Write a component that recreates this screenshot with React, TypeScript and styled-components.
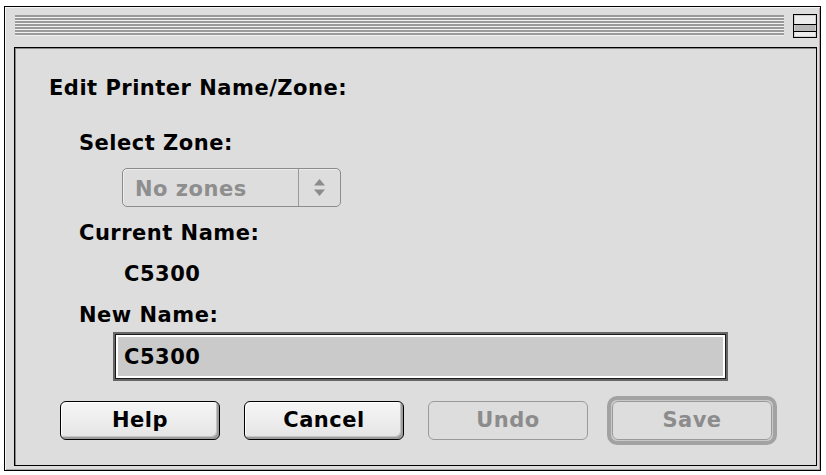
import React from "react";
import styled, { createGlobalStyle } from "styled-components";

const GlobalStyle = createGlobalStyle`
  html, body { margin: 0; padding: 0; background: #ffffff; }
  body { font-family: "DejaVu Sans", "Liberation Sans", sans-serif; }
  #root { width: 826px; height: 475px; overflow: hidden; }
`;

const Window = styled.div`
  margin: 6px 0 0 4px;
  width: 817px;
  height: 465px;
  box-sizing: border-box;
  border: 1px solid #000;
  background: #dddddd;
  box-shadow: inset 1px 1px 0 #f4f4f4, inset -1px -1px 0 #a8a8a8;
  padding: 0 3px 4px 9px;
  display: flex;
  flex-direction: column;
`;

const TitleBar = styled.div`
  height: 40px;
  box-sizing: border-box;
  padding-top: 8px;
  display: flex;
  align-items: flex-start;
`;

const Stripes = styled.div`
  margin-left: 1px;
  width: 769px;
  height: 21px;
  background: repeating-linear-gradient(
    to bottom,
    #9a9a9a 0px,
    #9a9a9a 2px,
    #f2f2f2 2px,
    #f2f2f2 3px
  );
`;

const CollapseBox = styled.svg`
  margin-left: 9px;
  margin-top: -1px;
  display: block;
`;

const Panel = styled.div`
  flex: 1;
  border: 1px solid #000;
  box-shadow: inset 1px 1px 0 #8a8a8a;
  padding: 28px 0 0 34px;
  display: flex;
  flex-direction: column;
  align-items: flex-start;
`;

const Text = styled.div<{ $indent?: number; $top?: number }>`
  font-family: "DejaVu Sans", "Liberation Sans", sans-serif;
  font-weight: bold;
  font-size: 21px;
  letter-spacing: 0.5px;
  line-height: 24px;
  height: 24px;
  color: #000;
  margin-left: ${(p) => p.$indent ?? 0}px;
  margin-top: ${(p) => p.$top ?? 0}px;
  white-space: nowrap;
`;

const Popup = styled.div`
  margin-left: 73px;
  margin-top: 13px;
  width: 219px;
  height: 39px;
  box-sizing: border-box;
  border: 1px solid #8c8c8c;
  border-radius: 5px;
  box-shadow: inset 1px 1px 0 #ececec;
  display: flex;
`;

const PopupLabel = styled.div`
  flex: 1;
  padding: 3px 0 0 12px;
  display: flex;
  align-items: center;
  font-weight: bold;
  font-size: 21px;
  letter-spacing: 0.5px;
  line-height: 24px;
  color: #8e8e8e;
`;

const PopupArrows = styled.div`
  width: 41px;
  border-left: 1px solid #9a9a9a;
  display: flex;
  align-items: center;
  justify-content: center;
`;

const Field = styled.div`
  margin-left: 64px;
  margin-top: 5px;
  width: 615px;
  height: 49px;
  box-sizing: border-box;
  border: 2px solid #666666;
  box-shadow: inset 0 0 0 1px #1a1a1a, inset 0 0 0 3px #ffffff;
  background: #cacaca;
  padding: 0 0 0 9px;
  display: flex;
  align-items: center;
  font-weight: bold;
  font-size: 21px;
  letter-spacing: 0.5px;
  line-height: 24px;
  color: #000;
`;

const ButtonRow = styled.div`
  margin-left: 11px;
  margin-top: 13px;
  height: 52px;
  display: flex;
  align-items: center;
  gap: 24px;
`;

const Button = styled.div<{ $disabled?: boolean }>`
  width: 160px;
  height: 39px;
  box-sizing: border-box;
  border: 1px solid ${(p) => (p.$disabled ? "#9a9a9a" : "#000")};
  border-radius: 6px;
  background: ${(p) =>
    p.$disabled ? "#dddddd" : "linear-gradient(#f6f6f6, #e4e4e4)"};
  box-shadow: ${(p) =>
    p.$disabled
      ? "none"
      : "inset 1px 1px 0 #ffffff, inset -2px -2px 0 #9c9c9c, inset -3px -3px 0 #c4c4c4"};
  display: flex;
  align-items: center;
  justify-content: center;
  font-weight: bold;
  font-size: 21px;
  letter-spacing: 0.5px;
  line-height: 24px;
  color: ${(p) => (p.$disabled ? "#8c8c8c" : "#000")};
`;

const DefaultRing = styled.div`
  margin-left: -5px;
  padding: 1px;
  border: 4px solid #a2a2a2;
  border-radius: 10px;
  box-shadow: inset 0 0 0 1px #c8c8c8, 0 0 0 0 transparent;
  display: flex;
`;

export default function App() {
  return (
    <>
      <GlobalStyle />
      <Window>
        <TitleBar>
          <Stripes />
          <CollapseBox width="24" height="24" viewBox="0 0 24 24">
            <rect x="0.5" y="0.5" width="23" height="23" fill="#cfcfcf" stroke="#000" />
            <rect x="2" y="2" width="20" height="8" fill="#ececec" />
            <rect x="2" y="11" width="20" height="6" fill="#b8b8b8" />
            <rect x="2" y="18" width="20" height="4" fill="#ececec" />
            <line x1="1" y1="10.5" x2="23" y2="10.5" stroke="#000" />
            <line x1="1" y1="17.5" x2="23" y2="17.5" stroke="#000" />
          </CollapseBox>
        </TitleBar>
        <Panel>
          <Text>Edit Printer Name/Zone:</Text>
          <Text $indent={30} $top={31}>Select Zone:</Text>
          <Popup>
            <PopupLabel>No zones</PopupLabel>
            <PopupArrows>
              <svg width="11" height="17" viewBox="0 0 11 17">
                <polygon points="5.5,0 11,6.5 0,6.5" fill="#8c8c8c" />
                <polygon points="0,10.5 11,10.5 5.5,17" fill="#8c8c8c" />
              </svg>
            </PopupArrows>
          </Popup>
          <Text $indent={30} $top={14}>Current Name:</Text>
          <Text $indent={75} $top={17}>C5300</Text>
          <Text $indent={30} $top={17}>New Name:</Text>
          <Field>C5300</Field>
          <ButtonRow>
            <Button>Help</Button>
            <Button>Cancel</Button>
            <Button $disabled>Undo</Button>
            <DefaultRing>
              <Button $disabled>Save</Button>
            </DefaultRing>
          </ButtonRow>
        </Panel>
      </Window>
    </>
  );
}
